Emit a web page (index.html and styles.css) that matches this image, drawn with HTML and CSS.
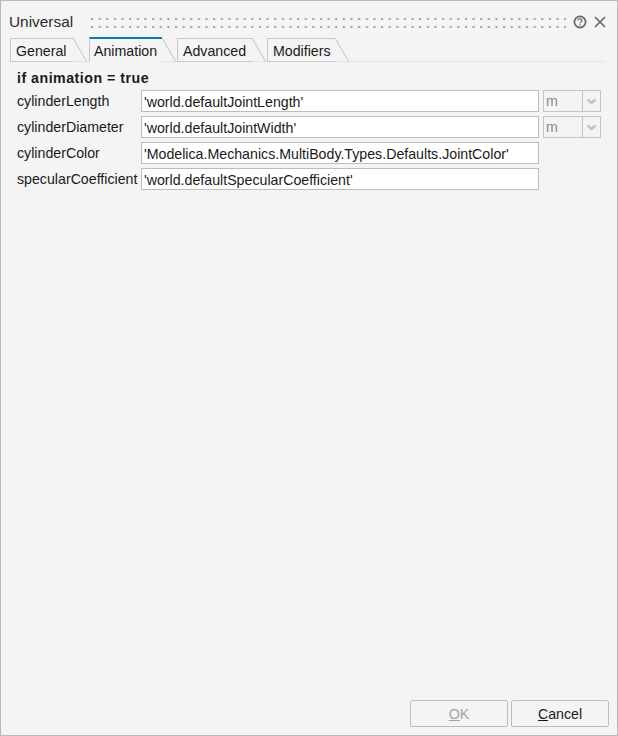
FILE: index.html
```html
<!DOCTYPE html>
<html lang="en">
<head>
    <meta charset="UTF-8">
    <title>Universal</title>
    <link rel="stylesheet" href="styles.css">
</head>
<body>

    <div class="dialog">
        <!-- Title bar -->
        <div class="title-bar">
            <span class="title">Universal</span>
            <svg class="grip" height="10">
                <defs>
                    <pattern id="gripDots" width="7.63" height="8" patternUnits="userSpaceOnUse">
                        <rect width="2.2" height="2" fill="#a6a6a6"/>
                    </pattern>
                </defs>
                <rect width="100%" height="100%" fill="url(#gripDots)"/>
            </svg>
            <svg class="help-icon" width="14" height="14" viewBox="0 0 14 14">
                <circle cx="7" cy="7" r="5.6" fill="none" stroke="#666" stroke-width="1.7"/>
                <path d="M5 5.6C5 4.4 5.9 3.8 7 3.8S9 4.5 9 5.4C9 6.6 7.1 6.7 7.1 8.2" fill="none" stroke="#666" stroke-width="1.2"/>
                <rect x="6.5" y="9.2" width="1.2" height="1.2" fill="#666"/>
            </svg>
            <svg class="close-icon" width="12" height="12" viewBox="0 0 12 12">
                <path d="M1 1L11 11M11 1L1 11" fill="none" stroke="#666" stroke-width="1.6"/>
            </svg>
        </div>

        <!-- Tabs -->
        <div class="tabs">
            <div class="tab tab-general">General<svg class="slope" viewBox="0 0 14 23" preserveAspectRatio="none"><path d="M0 0L14 23" fill="none" stroke="#c8c8c8"/></svg></div>
            <div class="tab tab-active tab-animation">Animation<svg class="slope" viewBox="0 0 14 23" preserveAspectRatio="none"><path d="M0 0L14 23" fill="none" stroke="#c8c8c8"/></svg></div>
            <div class="tab tab-advanced">Advanced<svg class="slope" viewBox="0 0 14 23" preserveAspectRatio="none"><path d="M0 0L14 23" fill="none" stroke="#c8c8c8"/></svg></div>
            <div class="tab tab-modifiers">Modifiers<svg class="slope" viewBox="0 0 14 23" preserveAspectRatio="none"><path d="M0 0L14 23" fill="none" stroke="#c8c8c8"/></svg></div>
        </div>

        <!-- Animation parameters -->
        <div class="content">
            <h4 class="group-title">if animation = true</h4>
            <div class="param-row">
                <label>cylinderLength</label>
                <input class="value" type="text" value="'world.defaultJointLength'">
                <div class="unit">
                    <span class="unit-name">m</span>
                    <span class="unit-arrow"><svg width="11" height="7" viewBox="0 0 11 7"><path d="M1.5 1.5L5.5 4.8L9.5 1.5" fill="none" stroke="#c2c2c2" stroke-width="2.6"/></svg></span>
                </div>
            </div>
            <div class="param-row">
                <label>cylinderDiameter</label>
                <input class="value" type="text" value="'world.defaultJointWidth'">
                <div class="unit">
                    <span class="unit-name">m</span>
                    <span class="unit-arrow"><svg width="11" height="7" viewBox="0 0 11 7"><path d="M1.5 1.5L5.5 4.8L9.5 1.5" fill="none" stroke="#c2c2c2" stroke-width="2.6"/></svg></span>
                </div>
            </div>
            <div class="param-row">
                <label>cylinderColor</label>
                <input class="value" type="text" value="'Modelica.Mechanics.MultiBody.Types.Defaults.JointColor'">
            </div>
            <div class="param-row">
                <label>specularCoefficient</label>
                <input class="value" type="text" value="'world.defaultSpecularCoefficient'">
            </div>
        </div>

        <!-- Buttons -->
        <div class="buttons">
            <button class="btn btn-disabled" disabled><u>O</u>K</button>
            <button class="btn"><u>C</u>ancel</button>
        </div>
    </div>

</body>
</html>
```

FILE: styles.css
```css
/* Global Styles */
* {
    margin: 0;
    padding: 0;
    box-sizing: border-box;
    font-family: 'Liberation Sans', Arial, sans-serif;
}

html, body {
    height: 100%;
    overflow: hidden;
}

/* DIALOG */
.dialog {
    display: flex;
    flex-direction: column;
    height: 736px;
    background: #f4f4f4;
    border: 1px solid #b9b9b9;
    color: #1a1a1a;
    font-size: 14.2px;
}

/* TITLE BAR */
.title-bar {
    display: flex;
    align-items: center;
    height: 36px;
    padding: 6px 11px 0 8px;
}

.title {
    font-size: 15.4px;
    color: #2b2b2b;
    width: 82px;
}

.grip {
    flex: 1;
    min-width: 0;
    margin: 2px 7px 0 0;
}

.help-icon {
    margin-right: 7px;
}

/* TABS */
.tabs {
    display: flex;
    height: 25px;
    margin: 0 12px 0 9px;
    gap: 2px;
    border-bottom: 1px solid #e4e4e4;
}

.tab {
    display: flex;
    align-items: center;
    position: relative;
    height: 24px;
    margin-top: 1px;
    padding: 2px 0 0 5px;
    font-size: 14.2px;
    background: #f4f4f4;
    border-left: 1px solid #c8c8c8;
    border-top: 1px solid #c8c8c8;
    border-bottom: 1px solid #c8c8c8;
}

.tab-general { width: 63px; margin-right: 14px; }
.tab-animation { width: 73px; margin-right: 13px; }
.tab-advanced { width: 75px; margin-right: 13px; }
.tab-modifiers { width: 68px; margin-right: 13px; }

.tab-active {
    height: 25px;
    margin-top: 0;
    padding: 0 0 0 4px;
    border-top: 2px solid #0a7ea4;
    border-bottom: none;
}

.slope {
    position: absolute;
    left: 100%;
    top: -1px;
    width: 14px;
    height: 24px;
}

/* CONTENT */
.content {
    flex: 1;
    padding: 8px 16px 0;
}

.group-title {
    font-size: 14.2px;
    font-weight: 700;
    letter-spacing: 0.5px;
    height: 20px;
    line-height: 16px;
}

.param-row {
    display: flex;
    align-items: center;
    height: 22px;
    margin-bottom: 4px;
}

.param-row label {
    width: 124px;
    white-space: nowrap;
    padding-bottom: 1px;
}

.value {
    flex-shrink: 0;
    width: 398px;
    height: 22px;
    padding: 2px 3px 0 2px;
    background: #fff;
    border: 1px solid #bdbdbd;
    font-size: 14.2px;
    color: #1a1a1a;
    outline: none;
}

/* UNIT SELECT */
.unit {
    display: flex;
    flex-shrink: 0;
    width: 58px;
    height: 22px;
    margin-left: 4px;
    color: #8a8a8a;
}

.unit-name {
    width: 39px;
    padding: 2px 0 0 2px;
    border: 1px solid #c4c4c4;
    border-right: none;
}

.unit-arrow {
    display: flex;
    align-items: center;
    justify-content: center;
    width: 19px;
    border: 1px solid #c4c4c4;
}

/* BUTTONS */
.buttons {
    display: flex;
    justify-content: flex-end;
    gap: 3px;
    padding: 0 8px 8px 0;
}

.btn {
    width: 98px;
    height: 27px;
    background: #f4f4f4;
    border: 1px solid #bdbdbd;
    border-radius: 2px;
    font-size: 14.2px;
    color: #1a1a1a;
}

.btn-disabled {
    color: #a3a3a3;
}
```
